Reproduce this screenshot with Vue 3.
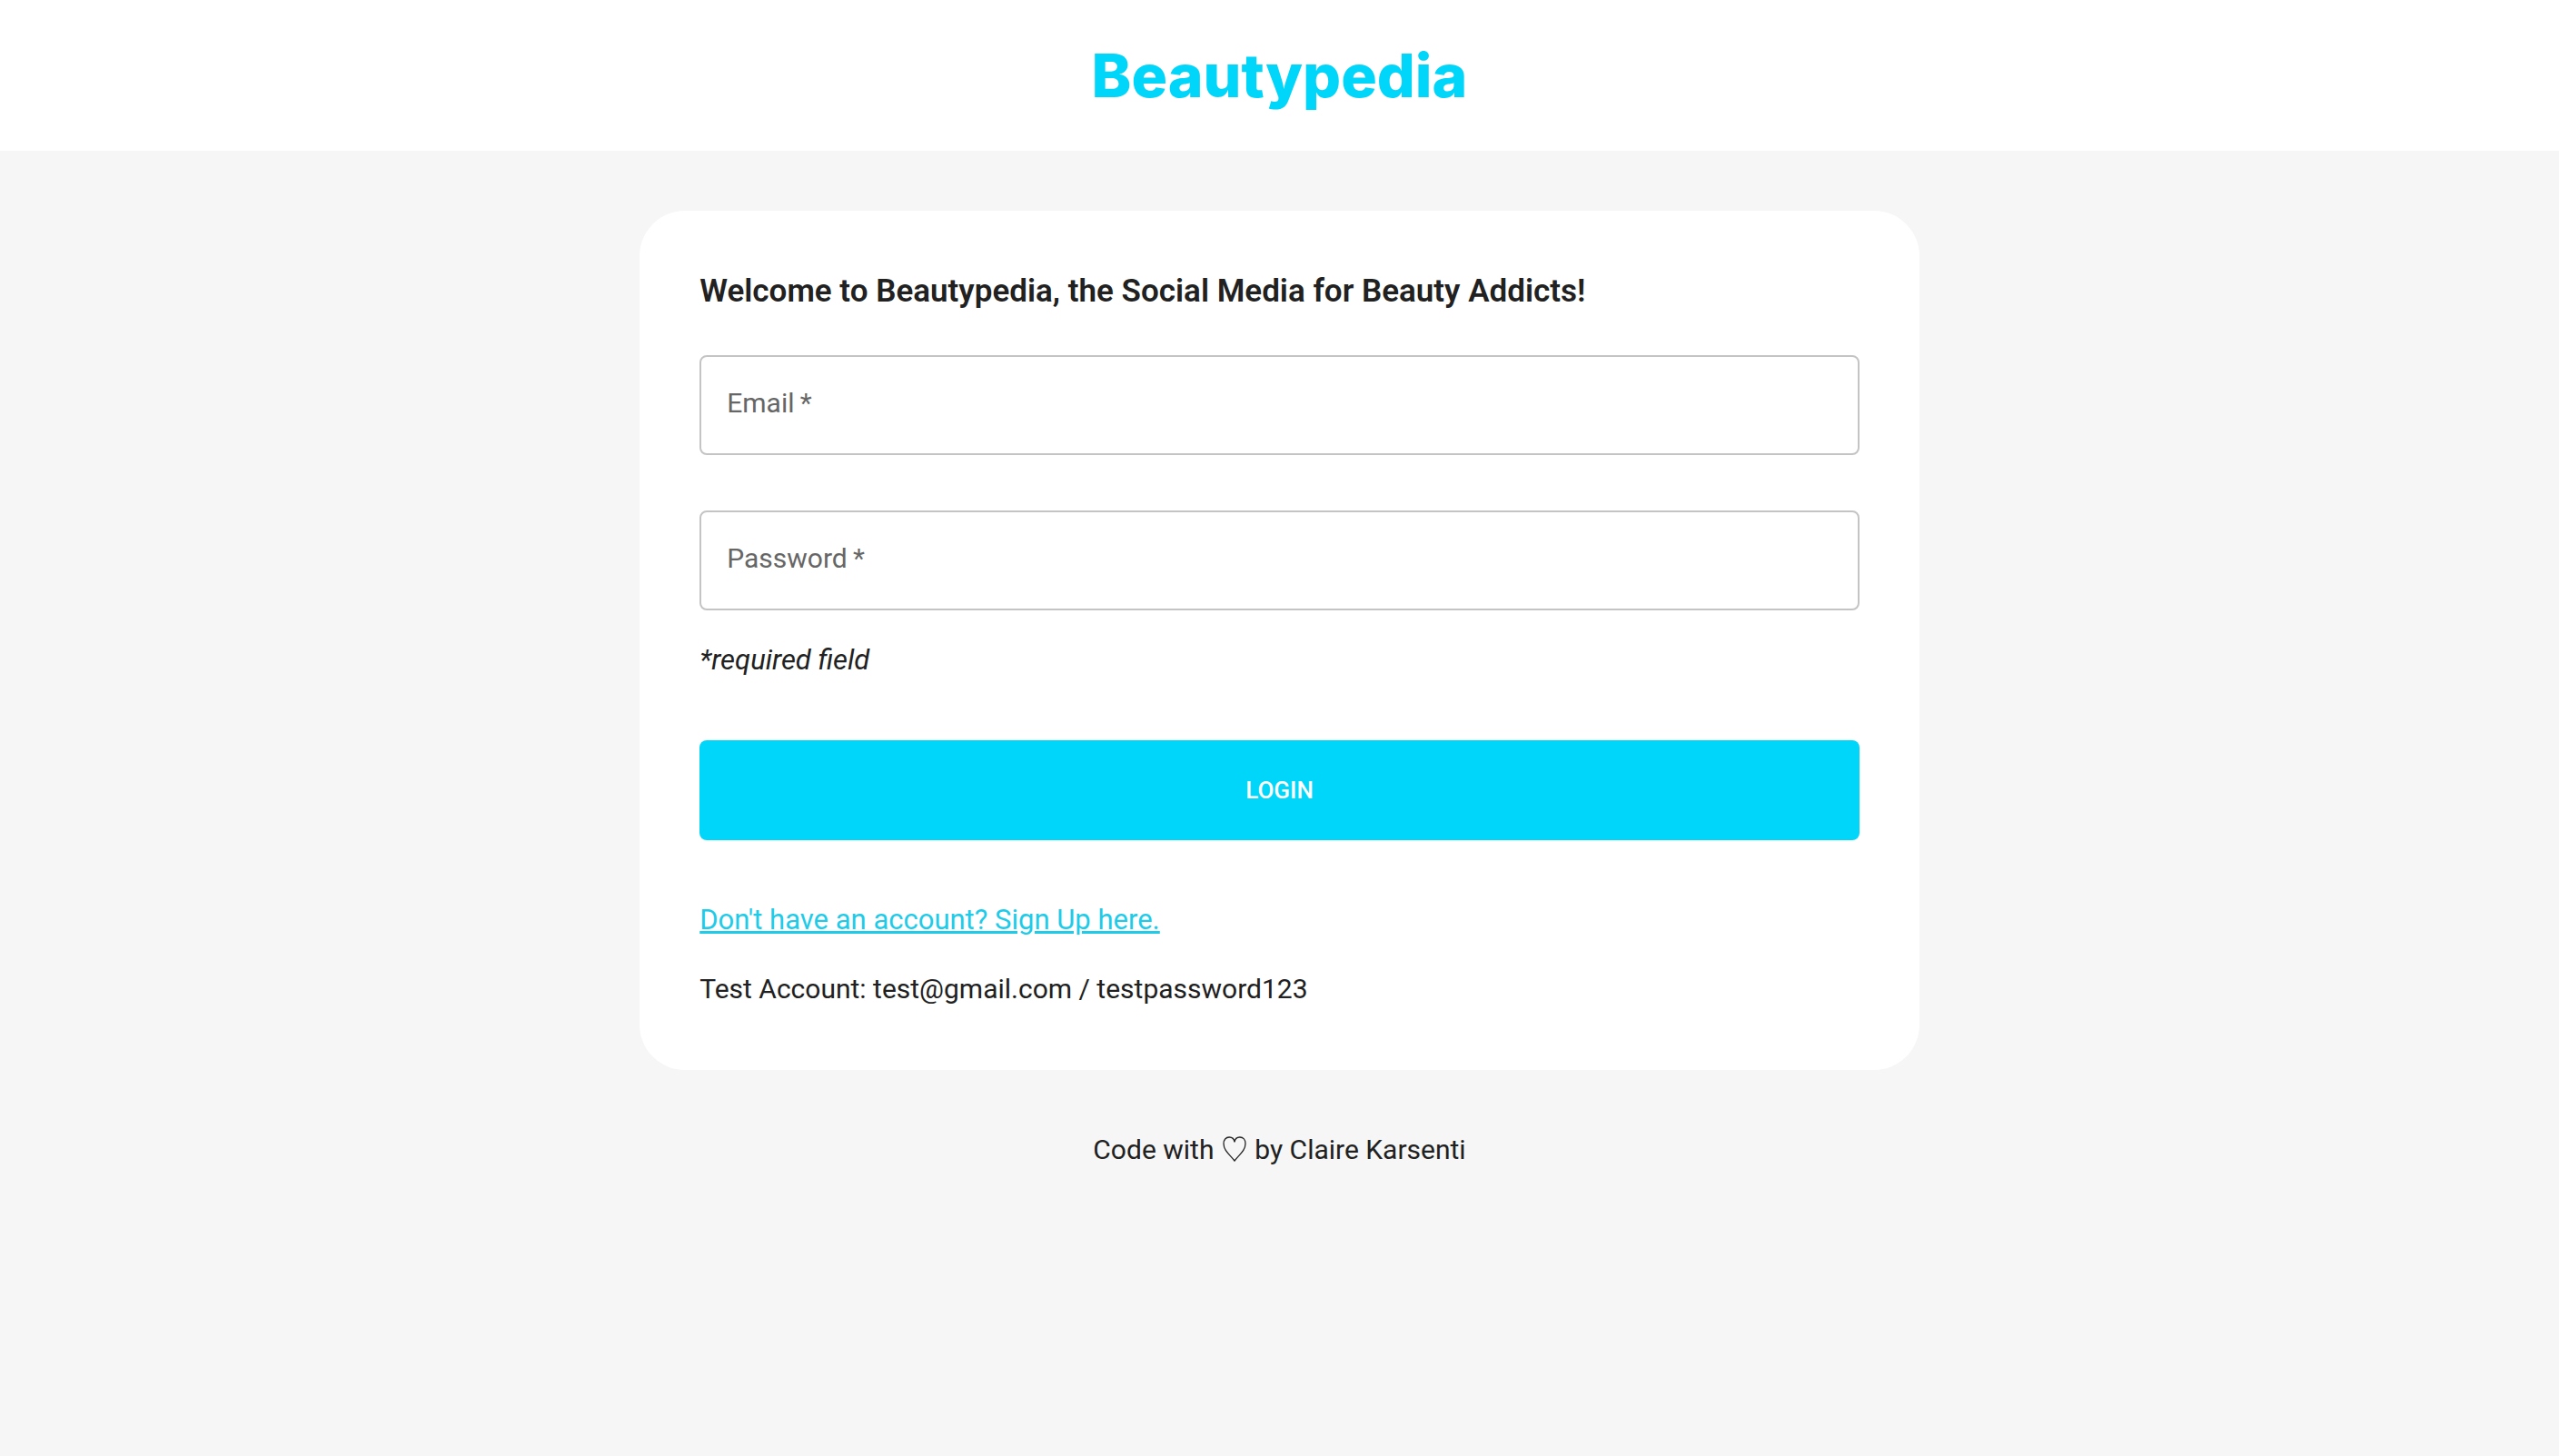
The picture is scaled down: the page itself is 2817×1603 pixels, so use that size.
<script setup>
import { ref } from 'vue'

const email = ref('')
const password = ref('')
</script>

<template>
  <div class="page">
    <header class="header">
      <h1 class="logo">Beautypedia</h1>
    </header>

    <main class="card">
      <h2 class="title">Welcome to Beautypedia, the Social Media for Beauty Addicts!</h2>
      <form class="form" @submit.prevent>
        <div class="field">
          <input id="email" v-model="email" class="input" type="email" required />
          <label class="label" for="email">Email&thinsp;*</label>
        </div>
        <div class="field">
          <input id="password" v-model="password" class="input" type="password" required />
          <label class="label" for="password">Password&thinsp;*</label>
        </div>
        <p class="hint">*required field</p>
        <button class="submit" type="submit">LOGIN</button>
      </form>
      <a class="link" href="#signup">Don't have an account? Sign Up here.</a>
      <p class="text">Test Account: test@gmail.com / testpassword123</p>
    </main>

    <footer class="footer">
      Code with
      <svg class="heart" viewBox="0 0 26 28" role="img" aria-label="love">
        <path
          d="M13 6.5C12.6 3 10.4 1 7.2 1 3.4 1 1 4 1 8c0 7.500 6.500 12 12 19C18.500 20 25 15.500 25 8c0-4-2.400-7-6.200-7C15.600 1 13.400 3 13 6.500Z"
          fill="none"
          stroke="currentColor"
          stroke-width="1.300"
        />
      </svg>
      by Claire Karsenti
    </footer>
  </div>
</template>

<style>
body {
  background: #f6f6f6;
}
</style>

<style scoped>
.page {
  font-family: Roboto, "Liberation Sans", sans-serif;
  font-size: 30px;
  line-height: 44px;
  color: #212121;
}

.header {
  padding: 41px 0;
  background: #fff;
  text-align: center;
}

.logo {
  margin: 0;
  font-family: Inter, Roboto, sans-serif;
  font-size: 66px;
  line-height: 84px;
  font-weight: 800;
  color: #00d5fa;
}

.card {
  box-sizing: border-box;
  width: 50%;
  margin: 66px auto;
  padding: 66px 66px 67px;
  border-radius: 50px;
  background: #fff;
}

.title {
  margin: 0 0 47px;
  font-size: 35px;
  line-height: 46px;
  font-weight: 600;
}

.field {
  position: relative;
  margin-bottom: 61px;
}

.input {
  box-sizing: border-box;
  display: block;
  width: 100%;
  height: 110px;
  padding: 0 30px;
  border: 2px solid #c4c4c4;
  border-radius: 8px;
  background: transparent;
  font: inherit;
  color: inherit;
}

.label {
  position: absolute;
  top: 31px;
  left: 30px;
  color: #666;
  pointer-events: none;
}

.field + .field {
  margin-bottom: 33px;
}

.input:focus + .label,
.input:valid + .label {
  top: -22px;
  background: #fff;
}

.hint {
  margin: 0;
  font-size: 31px;
  font-style: italic;
}

.submit {
  display: block;
  width: 100%;
  height: 110px;
  margin: 66px 0;
  border: 0;
  border-radius: 8px;
  background: #00d5fa;
  font-family: inherit;
  font-size: 26px;
  font-weight: 500;
  color: #fff;
  cursor: pointer;
}

.link {
  display: block;
  width: fit-content;
  font-size: 31px;
  color: #1ecbe8;
}

.text {
  margin: 32px 0 0;
}

.footer {
  text-align: center;
}

.heart {
  width: 26px;
  height: 28px;
  margin: 0 2px;
  vertical-align: -3px;
}
</style>
